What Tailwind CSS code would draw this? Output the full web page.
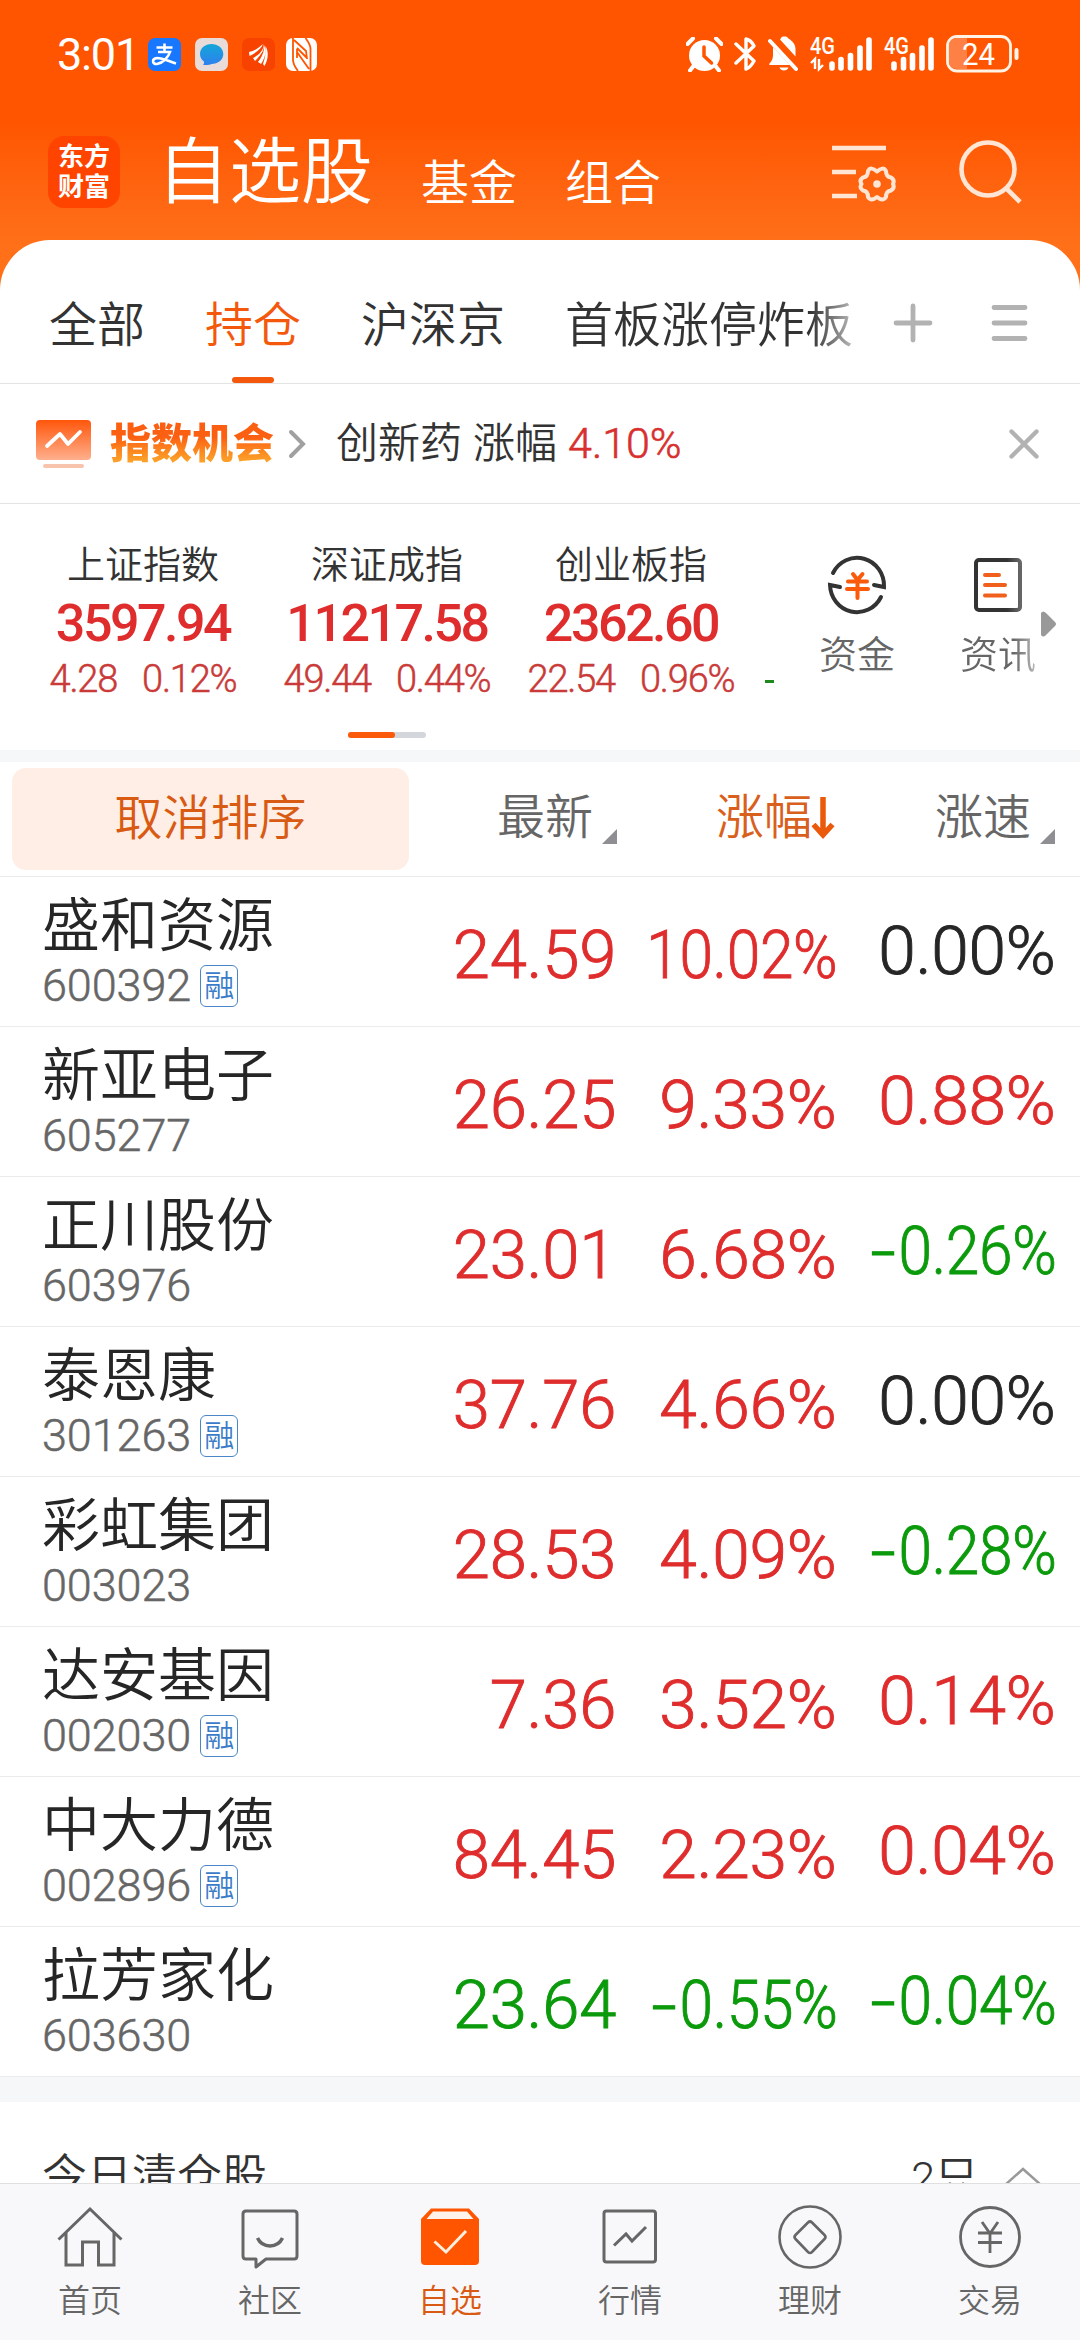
<!DOCTYPE html>
<html lang="zh-CN">
<head>
    <meta charset="UTF-8">
    <meta name="viewport" content="width=device-width, initial-scale=1.0">
    <title>自选股</title>
    <script src="https://cdn.jsdelivr.net/npm/@tailwindcss/browser@4"></script>
</head>
<body class="bg-white">
<div class="w-[1080px] h-[2340px] flex flex-col overflow-hidden bg-white text-[#333] leading-none whitespace-nowrap font-[Roboto,'Noto_Sans_CJK_SC',sans-serif]">

    <!-- Header -->
    <header class="h-[290px] shrink-0 bg-linear-to-b from-[#ff5500] from-42% to-[#ff7019] to-85% text-white">
        <div class="h-[108px] flex items-center pl-[57px] pr-[60px]">
            <span class="text-[45px] w-[91px] tracking-[-1.2px]">3:01</span>
            <svg class="w-[33px] h-[33px]" viewBox="0 0 33 33">
                <rect width="33" height="33" rx="7" fill="#1777ff"/>
                <path d="M8.500 9.500h16M16.500 5.500v8M10 14h12c-1.500 5-7 11-13 12-5 .5-5.500-5.500 0-6 6 0 11 3 19 5.500" fill="none" stroke="#fff" stroke-width="2.600"/>
            </svg>
            <svg class="ml-[14px] w-[33px] h-[33px]" viewBox="0 0 33 33">
                <defs><linearGradient id="chat" x1="0" y1="0" x2="0" y2="1"><stop stop-color="#14a6d8"/><stop offset="1" stop-color="#2e80ef"/></linearGradient></defs>
                <rect width="33" height="33" rx="7" fill="#e9dcd8"/>
                <path d="M16.500 6c6.500 0 11.800 4.300 11.800 10S23 26 16.500 26c-1.500 1-5 1.300-8.500 1 1-1.300 1.300-2.500.9-3.600C6.500 21.600 5 19 5 16 5 10.300 10 6 16.500 6z" fill="url(#chat)"/>
            </svg>
            <svg class="ml-[14px] w-[33px] h-[33px]" viewBox="0 0 33 33">
                <rect width="33" height="33" rx="7" fill="#f84300"/>
                <path d="M7 14c5-.5 9-4 14-8-2 5-6 8-13.500 12zM11 20c6-3 10-7 11-14 .5 7-4 12-9 17zM16 24c4-5 6-10 6.500-17 2 6 1 12-3.500 19zM21 26c2-6 3-11 2.500-18 4 7 2 15-1 20z" fill="#fff"/>
            </svg>
            <svg class="ml-[11px] w-[31px] h-[33px]" viewBox="0 0 31 33">
                <rect width="31" height="33" rx="7" fill="#fff"/>
                <path d="M7 0v22c0 4 2 7 5 11M8 2l12 11 1 8M11 10l10 10M11 14l12 17M11 11v9M24.500 33V11c0-4-2-7-5-11" fill="none" stroke="#ff5500" stroke-width="1.800"/>
            </svg>
            <svg class="ml-auto w-[37px] h-[35px]" viewBox="0 0 37 35" fill="none">
                <circle cx="18.500" cy="18.500" r="15.500" fill="#fff"/>
                <path d="M7 1.500L1.500 7M30 1.500L35.500 7M7.500 29L4 33.500M29.500 29l3.500 4.500" stroke="#fff" stroke-width="4" stroke-linecap="round"/>
                <path d="M18 10v9l7.500 7" stroke="#ff5500" stroke-width="3.500" stroke-linecap="round"/>
            </svg>
            <svg class="ml-[11px] w-[23px] h-[36px]" viewBox="0 0 23 36" fill="none" stroke="#fff" stroke-width="3.400" stroke-linecap="round" stroke-linejoin="round">
                <path d="M2 8l18 17q-4 7-8 8V3q5 1 8 7L2 27"/>
            </svg>
            <svg class="ml-[11px] w-[31px] h-[36px]" viewBox="0 0 31 36">
                <path d="M12 3.500c1-1 1-2.500 3-3h3c1.500.5 2 2 4 3 4 3 5.500 6 5.500 10v7zM5 11l17 18H2c-1 0-1.500-1 0-2 2-2 3-5 3-8zM11.500 31.500h9c-1 4-8 4-9 0z" fill="#fff"/>
                <path d="M2 5l26 28" stroke="#fff" stroke-width="4" stroke-linecap="round"/>
            </svg>
            <svg class="ml-[11px] w-[64px] h-[40px] overflow-visible" viewBox="0 -2 64 40">
                <text x="0" y="17.500" font-size="24" font-weight="500" fill="#fff" textLength="25" lengthAdjust="spacingAndGlyphs">4G</text>
                <path d="M1 27l4-4v10M9 23v10l4-4" fill="none" stroke="#fff" stroke-width="2.400"/>
                <path d="M22 28v4M31 23.500V32M40.500 19.500V32M50 12v20M59 4v28" stroke="#fff" stroke-width="5.600" stroke-linecap="round"/>
            </svg>
            <svg class="ml-[10px] w-[51px] h-[40px] overflow-visible" viewBox="0 -2 51 40">
                <text x="0" y="17.500" font-size="24" font-weight="500" fill="#fff" textLength="25" lengthAdjust="spacingAndGlyphs">4G</text>
                <path d="M10 28v4M19.500 23.500V32M28.500 19.500V32M38 12v20M47 4v28" stroke="#fff" stroke-width="5.600" stroke-linecap="round"/>
            </svg>
            <svg class="ml-[11px] w-[74px] h-[38px]" viewBox="0 0 74 38">
                <rect x="1.500" y="1.500" width="63" height="34.500" rx="9.500" fill="none" stroke="#fff3e6" stroke-width="2.800"/>
                <path d="M21 3H11q-8 0-8 8v15q0 8 8 8h10z" fill="#ff8044"/>
                <text x="16" y="30" font-size="32" fill="#fff" textLength="33" lengthAdjust="spacingAndGlyphs">24</text>
                <rect x="68.500" y="13" width="4" height="12" rx="2" fill="#fff3e6"/>
            </svg>
        </div>
        <div class="flex pl-12 pr-[57px] pt-7">
            <div class="w-[72px] h-[72px] rounded-2xl bg-[#ff4400] flex flex-col items-center pt-[6px] font-bold text-[26px] leading-[30px]"><span>东方</span><span>财富</span></div>
            <h1 class="ml-[37px] mt-px text-[72px] font-[350]">自选股</h1>
            <span class="ml-[48px] mt-[24px] text-[48px] font-[350]">基金</span>
            <span class="ml-12 mt-[24px] text-[48px] font-[350]">组合</span>
            <svg class="ml-auto mt-2 w-[64px] h-[60px]" viewBox="0 0 64 60" fill="none" stroke="#ffe5d3" stroke-width="4.600">
                <path d="M0 4h54M0 28h24M0 52h25"/>
                <path stroke-width="4" stroke-linejoin="round" d="M45 27.500Q51 22 54 27Q54 33 59 33.500Q63 36 61 40Q63 44 59 46.500Q54 47 54 53Q51 58 45 53Q39 58 36 53Q36 47 31 46.500Q27 44 29.500 40Q27 36 31 33.500Q36 33 36 27Q39 22 45 27.500z"/>
                <circle cx="45" cy="40" r="3.800" fill="#ffe5d3" stroke="none"/>
            </svg>
            <svg class="ml-[62px] mt-1 w-[65px] h-[64px]" viewBox="0 0 65 64" fill="none" stroke="#ffe5d3" stroke-width="4.600">
                <circle cx="30" cy="29" r="26.500"/><path d="M48 48l14 14"/>
            </svg>
        </div>
    </header>

    <!-- Group tabs -->
    <nav class="-mt-[50px] h-[144px] shrink-0 bg-white rounded-t-[50px] border-b border-[#e4e4e4] flex font-[350] text-[48px] pl-[49px]">
        <span class="pt-[62px]">全部</span>
        <div class="ml-[60px] flex flex-col items-center pt-[62px] text-[#f3580c]">
            <span>持仓</span>
            <span class="mt-[27px] w-[42px] h-[6px] rounded-full bg-[#f3580c]"></span>
        </div>
        <span class="ml-[60px] pt-[62px]">沪深京</span>
        <span class="ml-[60px] pt-[62px] w-[288px] bg-linear-to-r from-[#333] from-85% to-[#bbb] bg-clip-text text-transparent">首板涨停炸板</span>
        <svg class="ml-[40px] mt-[63px] w-[40px] h-[40px]" viewBox="0 0 40 40" stroke="#b2b2b2" stroke-width="4.800" stroke-linecap="round"><path d="M3 20h34M20 3v34"/></svg>
        <svg class="ml-[57px] mt-[63px] w-[38px] h-[40px]" viewBox="0 0 38 40" stroke="#b2b2b2" stroke-width="4.800" stroke-linecap="round"><path d="M4 4.500h31M4 20h31M4 35.500h31"/></svg>
    </nav>

    <!-- Index notice -->
    <div class="h-[120px] shrink-0 border-b border-[#e4e4e4] flex items-center pl-9">
        <svg class="w-[55px] h-[50px]" viewBox="0 0 55 50">
            <defs><linearGradient id="card" x1="0" y1="0" x2="0" y2="1"><stop stop-color="#ff560b"/><stop offset="1" stop-color="#ffb08e"/></linearGradient></defs>
            <rect y="1" width="55" height="40" rx="4" fill="url(#card)"/>
            <path d="M11 27l13-12 8 10 12-12" fill="none" stroke="#fff" stroke-width="3.800" stroke-linecap="round" stroke-linejoin="round"/>
            <rect x="7" y="45" width="41" height="4" rx="2" fill="#f9c4ae"/>
        </svg>
        <span class="ml-[19px] pt-[2px] text-[41px] font-black bg-linear-to-b from-[#fb5f12] from-35% to-[#fba028] to-90% bg-clip-text text-transparent">指数机会</span>
        <svg class="ml-[14px] w-[18px] h-[30px]" viewBox="0 0 18 30" fill="none" stroke="#a0a0a0" stroke-width="4" stroke-linecap="round"><path d="M3 3l12 12L3 27"/></svg>
        <span class="ml-[30px] text-[42px] font-[350]">创新药</span>
        <span class="ml-[11px] text-[42px] font-[350]">涨幅</span>
        <span class="ml-[11px] text-[43px] font-[350] [-webkit-text-stroke-width:.6px] text-[#d8302f]">4.10%</span>
        <svg class="ml-auto mr-[41px] w-[30px] h-[30px]" viewBox="0 0 30 30" stroke="#b2b2b2" stroke-width="4.400" stroke-linecap="round"><path d="M2.500 2.500l25 25M27.500 2.500l-25 25"/></svg>
    </div>

    <!-- Market indices -->
    <section class="h-[246px] shrink-0 flex">
        <div class="w-[776px] flex flex-col overflow-hidden">
            <div id="indices" class="flex pl-[21px]"></div>
            <div class="mt-[34px] ml-[348px] w-[78px] h-[6px] rounded-full bg-[#d3d6da]"><div class="w-[47px] h-[6px] rounded-full bg-[#fa5a0a]"></div></div>
        </div>
        <div class="ml-[43px] pt-[50px] flex flex-col items-center">
            <svg class="w-[60px] h-[62px]" viewBox="0 0 60 62" fill="none" stroke="#333" stroke-width="4" stroke-linecap="round">
                <path d="M6 19A27 28 0 0 1 57 33l-10-2M54 43A27 28 0 0 1 3 31l10 2"/>
                <path stroke="#fa5a0a" d="M26 20l4.500 6 5-6M21 27.500h19M20 35h21M30.500 27v17"/>
            </svg>
            <span class="mt-5 text-[38px] font-[350] text-[#666]">资金</span>
        </div>
        <div class="ml-[65px] pt-[52px] flex flex-col items-center">
            <svg class="w-[50px] h-[60px]" viewBox="0 0 50 60" fill="none" stroke="#333" stroke-width="4" stroke-linecap="round">
                <defs><linearGradient id="fade"><stop offset=".7" stop-color="#333"/><stop offset="1" stop-color="#666"/></linearGradient></defs>
                <rect x="3" y="4" width="44" height="50" rx="3" stroke="url(#fade)"/>
                <path stroke="#f0601c" d="M12 19h14M12 29h20M12 39.500h20"/>
            </svg>
            <span class="mt-5 text-[38px] font-[350] bg-linear-to-r from-[#666] from-70% to-[#bbb] bg-clip-text text-transparent">资讯</span>
        </div>
        <svg class="ml-[5px] mt-[107px] w-[15px] h-[26px]" viewBox="0 0 15 26"><path d="M0 2q2-3 5 0l9 9q2 2 0 4l-9 9q-3 3-5 0z" fill="#999"/></svg>
    </section>

    <div class="h-3 shrink-0 bg-[#f6f7f9]"></div>

    <!-- Table header -->
    <div class="h-[115px] shrink-0 border-b border-[#ebebeb] flex pl-3 pt-[6px] text-[48px] font-[350] text-[#666]">
        <button class="w-[397px] h-[102px] rounded-[14px] bg-[#feeee5] text-[#d95a12]">取消排序</button>
        <div class="flex ml-[88px] pt-[26px]">最新<svg class="ml-[9px] mt-[35px] w-[15px] h-[15px]" viewBox="0 0 15 15"><path d="M15 0v15H0z" fill="#8e8e93"/></svg></div>
        <div class="flex ml-[99px] pt-[26px] text-[#d9601c]">涨幅<svg class="-ml-px mt-[3px] w-[24px] h-[44px]" viewBox="0 0 24 44" fill="none" stroke="#eb5a0a" stroke-width="5.500"><path d="M12 0v38M2.500 27.500L12 38l9.500-10.500"/></svg></div>
        <div class="flex ml-[100px] pt-[26px]">涨速<svg class="ml-[9px] mt-[35px] w-[15px] h-[15px]" viewBox="0 0 15 15"><path d="M15 0v15H0z" fill="#8e8e93"/></svg></div>
    </div>

    <main id="stocks" class="shrink-0"></main>

    <div class="h-[25px] shrink-0 bg-[#f6f7f9]"></div>

    <!-- Sold today -->
    <div class="h-[81px] shrink-0 overflow-hidden flex pl-[42px] pt-[52px] text-[45px] font-[350]">
        <span>今日清仓股</span>
        <span class="ml-auto mt-[2px] text-[43px]">2只</span>
        <svg class="ml-[26px] mr-[38px] mt-[12px] w-[38px] h-[20px]" viewBox="0 0 38 20" fill="none" stroke="#999" stroke-width="2.500"><path d="M1 19L19 3l18 16"/></svg>
    </div>

    <!-- Bottom navigation -->
    <footer class="h-[157px] shrink-0 bg-[#f8f8fa] border-t border-[#e0e0e0] grid grid-cols-6 text-[32px] font-[350] text-[#666]">
        <div class="flex flex-col items-center pt-[20px]">
            <svg class="w-[66px] h-[66px]" viewBox="0 0 66 66" fill="none" stroke="#666" stroke-width="3"><path d="M1.500 35.500L33 5l31.500 30.500M9 29v32h16.500V38h16v23H57V29"/></svg>
            <span class="mt-[15px]">首页</span>
        </div>
        <div class="flex flex-col items-center pt-[20px]">
            <svg class="w-[66px] h-[66px]" viewBox="0 0 66 66" fill="none" stroke="#666" stroke-width="3"><path stroke-linejoin="round" d="M8 7h49q3 0 3 3v42q0 3-3 3H29l-10 8v-8H9q-3 0-3-3V10q0-3 3-3z"/><path stroke-width="3.500" d="M20.500 34c5 10.500 20 10.500 25 0"/></svg>
            <span class="mt-[15px]">社区</span>
        </div>
        <div class="flex flex-col items-center pt-[20px] text-[#d95a12]">
            <svg class="w-[66px] h-[66px]" viewBox="0 0 66 66" fill="none"><path fill="#ff5500" d="M14 4.500h38L62 15v42q0 4-4 4H8q-4 0-4-4V15z"/><path fill="#fdf3ea" d="M16 7.500h34l6.500 7.500h-47z"/><path stroke="#fdeedd" stroke-width="3" d="M17.500 37.500L29 48l20-21"/></svg>
            <span class="mt-[15px]">自选</span>
        </div>
        <div class="flex flex-col items-center pt-[20px]">
            <svg class="w-[66px] h-[66px]" viewBox="0 0 66 66" fill="none" stroke="#666" stroke-width="3"><rect x="7" y="7" width="51.500" height="51" rx="2.500"/><path d="M17 41.500l12-11.500 6 7 14-14"/></svg>
            <span class="mt-[15px]">行情</span>
        </div>
        <div class="flex flex-col items-center pt-[20px]">
            <svg class="w-[66px] h-[66px]" viewBox="0 0 66 66" fill="none" stroke="#666" stroke-width="2.600"><circle cx="33" cy="33" r="30.500"/><path stroke-linejoin="round" d="M31 18.500q2-2 4 0l12.500 12.500q2 2 0 4L35 48q-2 2-4 0L18.500 35q-2-2 0-4z"/></svg>
            <span class="mt-[15px]">理财</span>
        </div>
        <div class="flex flex-col items-center pt-[20px]">
            <svg class="w-[66px] h-[66px]" viewBox="0 0 66 66" fill="none" stroke="#666" stroke-width="2.800"><circle cx="33" cy="33" r="29.500"/><path d="M25 18l8 11.500L41 18M21 29h24M21 38.500h24M33 29v20"/></svg>
            <span class="mt-[15px]">交易</span>
        </div>
    </footer>
</div>

<script>
    const RED = "text-[#df2c2c]";
    const GREEN = "text-[#0b9a0b]";
    const BLACK = "text-[#262626]";

    const indices = [
        { name: "上证指数", value: "3597.94", diff: "4.28", rate: "0.12%" },
        { name: "深证成指", value: "11217.58", diff: "49.44", rate: "0.44%" },
        { name: "创业板指", value: "2362.60", diff: "22.54", rate: "0.96%" },
    ];

    const stocks = [
        { name: "盛和资源", code: "600392", margin: true, price: "24.59", rate: "10.02%", speed: "0.00%" },
        { name: "新亚电子", code: "605277", margin: false, price: "26.25", rate: "9.33%", speed: "0.88%" },
        { name: "正川股份", code: "603976", margin: false, price: "23.01", rate: "6.68%", speed: "-0.26%" },
        { name: "泰恩康", code: "301263", margin: true, price: "37.76", rate: "4.66%", speed: "0.00%" },
        { name: "彩虹集团", code: "003023", margin: false, price: "28.53", rate: "4.09%", speed: "-0.28%" },
        { name: "达安基因", code: "002030", margin: true, price: "7.36", rate: "3.52%", speed: "0.14%" },
        { name: "中大力德", code: "002896", margin: true, price: "84.45", rate: "2.23%", speed: "0.04%" },
        { name: "拉芳家化", code: "603630", margin: false, price: "23.64", rate: "-0.55%", speed: "-0.04%" },
    ];

    function color(rate) {
        if (rate.startsWith("-")) return GREEN;
        return parseFloat(rate) === 0 ? BLACK : RED;
    }

    // six-character numbers are squeezed to stay inside their column
    function squeeze(text) {
        return text.length > 5 ? "scale-x-90" : "scale-x-101";
    }

    // the font's own hyphen is short, widen it to the digits' rhythm
    function percent(text) {
        return text.replace("-", `<span class="inline-block origin-right scale-x-150 mr-[3px]">-</span>`);
    }

    document.getElementById("indices").innerHTML = indices.map(item => `
        <div class="w-[244px] shrink-0 flex flex-col items-center pt-[42px]">
            <span class="text-[38px] font-[350]">${item.name}</span>
            <span class="mt-[14px] text-[52px] font-medium tracking-[-2.5px] text-[#df2c2c]">${item.value}</span>
            <div class="mt-[10px] flex gap-[25px] text-[38px] font-[350] [-webkit-text-stroke-width:.5px] tracking-[-1.2px] text-[#c93a38]"><span>${item.diff}</span><span>${item.rate}</span></div>
        </div>`).join("") + `<span class="ml-[12px] mt-[176px] w-[9px] h-[3px] shrink-0 bg-[#1e8a1e]"></span>`;

    document.getElementById("stocks").innerHTML = stocks.map(s => `
        <div class="h-[150px] border-b border-[#ebebeb] flex">
            <div class="w-[383px] pl-[42px] pt-[20px]">
                <div class="text-[58px] font-[350] text-[#262626]">${s.name}</div>
                <div class="mt-[7px] flex items-center h-[46px]">
                    <span class="text-[45px] font-[350] [-webkit-text-stroke-width:.5px] tracking-[-.1px] text-[#666]">${s.code}</span>
                    ${s.margin ? `<span class="ml-[9px] mt-[2px] w-[38px] h-[42px] rounded-[6px] border border-[#4a86c8] text-center text-[30px] leading-[40px] font-[350] text-[#3a7cc8]">融</span>` : ""}
                </div>
            </div>
            <div class="w-[233px] pt-[45px] text-right text-[67px] font-[350] [-webkit-text-stroke-width:.9px] tracking-[-.3px] ${color(s.rate)}"><span class="inline-block">${s.price}</span></div>
            <div class="w-[221px] pt-[45px] text-right text-[67px] font-[350] [-webkit-text-stroke-width:.9px] tracking-[-.3px] ${color(s.rate)}"><span class="inline-block origin-right ${squeeze(s.rate)}">${percent(s.rate)}</span></div>
            <div class="w-[219px] pt-[41px] text-right text-[67px] font-[350] [-webkit-text-stroke-width:.9px] tracking-[-.3px] ${color(s.speed)}"><span class="inline-block origin-right ${squeeze(s.speed)}">${percent(s.speed)}</span></div>
        </div>`).join("");
</script>
</body>
</html>
